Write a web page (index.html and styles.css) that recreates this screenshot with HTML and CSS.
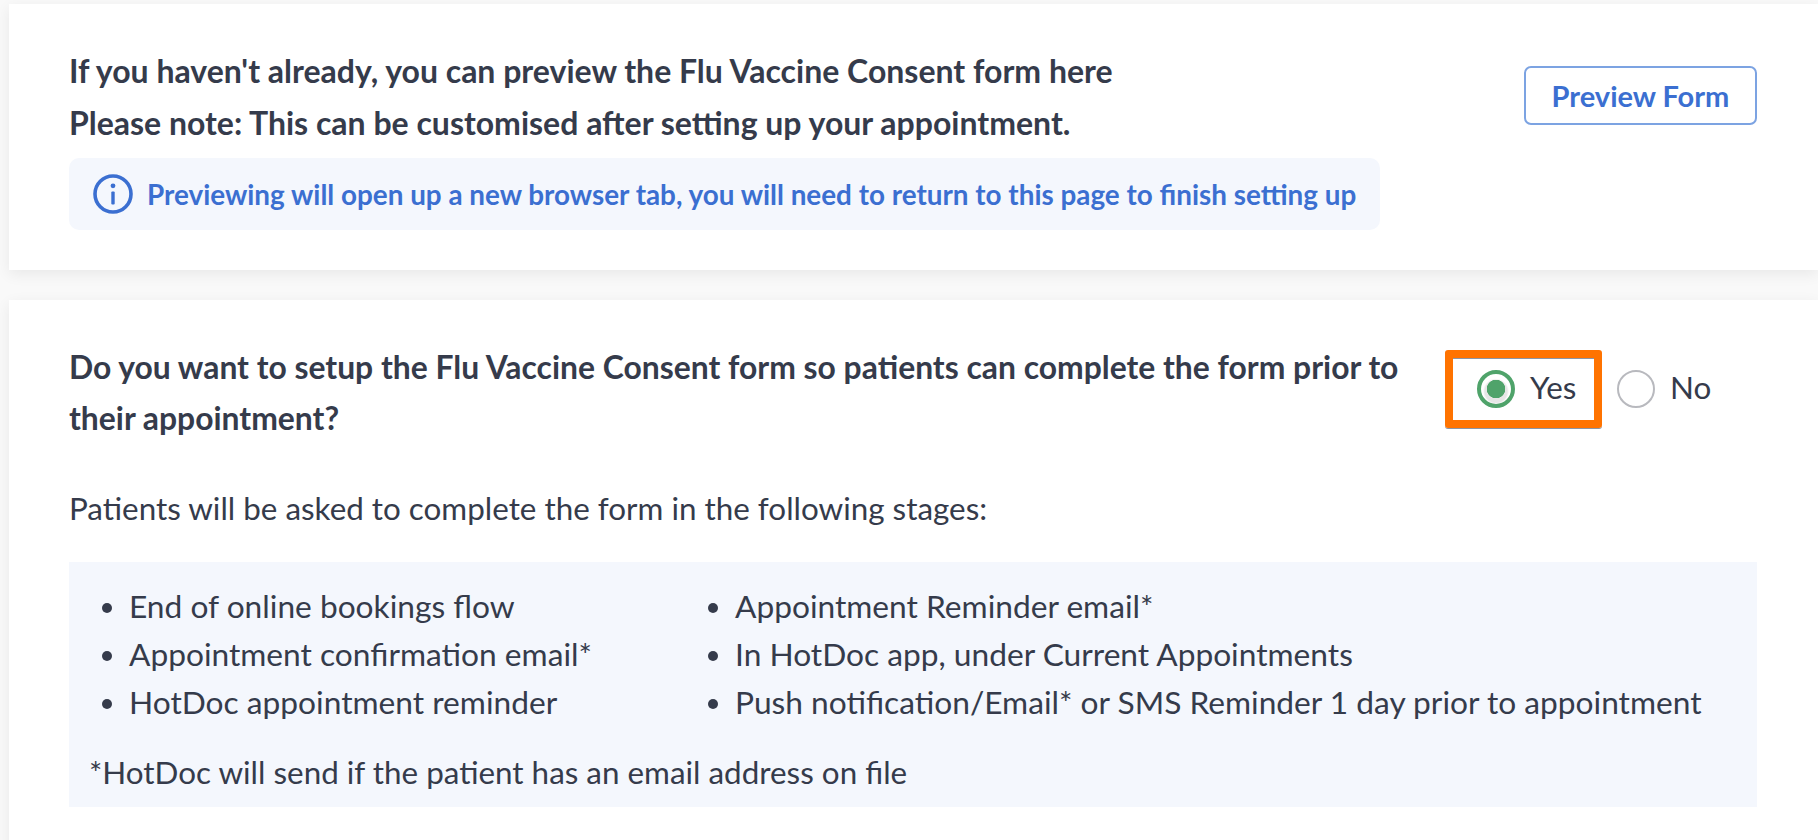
FILE: index.html
```html
<!DOCTYPE html>
<html lang="en">
<head>
<meta charset="utf-8">
<title>Flu Vaccine Consent form</title>
<link rel="stylesheet" href="styles.css">
</head>
<body>
<main class="page">
  <section class="card card-preview">
    <div class="preview-main">
      <p class="strong">If you haven't already, you can preview the Flu Vaccine Consent form here</p>
      <p class="strong">Please note: This can be customised after setting up your appointment.</p>
      <div class="notice">
        <svg class="notice-icon" viewBox="0 0 40 40" aria-hidden="true">
          <circle cx="20" cy="20" r="18" fill="none" stroke="currentColor" stroke-width="3.6"/>
          <circle cx="20" cy="11.8" r="2.4" fill="currentColor"/>
          <rect x="18.3" y="17.5" width="3.4" height="13" rx="1" fill="currentColor"/>
        </svg>
        <span class="notice-text">Previewing will open up a new browser tab, you will need to return to this page to finish setting up</span>
      </div>
    </div>
    <button class="btn" type="button">Preview Form</button>
  </section>
  <section class="card card-setup">
    <div class="question-row">
      <p class="strong question">Do you want to setup the Flu Vaccine Consent form so patients can complete the form prior to their appointment?</p>
      <div class="radios">
        <label class="radio radio-highlight"><span class="dot dot-on"></span>Yes</label>
        <label class="radio"><span class="dot"></span>No</label>
      </div>
    </div>
    <p class="stages">Patients will be asked to complete the form in the following stages:</p>
    <div class="stage-box">
      <div class="stage-lists">
        <ul class="stage-list stage-list-a">
          <li>End of online bookings flow</li>
          <li>Appointment confirmation email*</li>
          <li>HotDoc appointment reminder</li>
        </ul>
        <ul class="stage-list">
          <li>Appointment Reminder email*</li>
          <li>In HotDoc app, under Current Appointments</li>
          <li>Push notification/Email* or SMS Reminder 1 day prior to appointment</li>
        </ul>
      </div>
      <p class="footnote">*HotDoc will send if the patient has an email address on file</p>
    </div>
  </section>
</main>
</body>
</html>
```
FILE: styles.css
```css
* { box-sizing: border-box; }
html, body { margin: 0; height: 100%; overflow: hidden; }
body {
  background: #f9f9f9;
  color: #353b4b;
  font-family: "Lato", "Liberation Sans", sans-serif;
  font-size: 31.4px;
  line-height: 52px;
}
p { margin: 0; }
.page { padding: 4px 0 0 9px; }
.card {
  background: #fff;
  box-shadow: 0 4px 14px rgba(0, 0, 0, 0.07);
  padding: 41px 61px 40px 60px;
}
.card-preview { display: flex; justify-content: space-between; align-items: flex-start; }
.card-setup { margin-top: 30px; height: 560px; padding-top: 42px; }
.strong { font-weight: 700; font-size: 32px; line-height: 51.5px; }
.notice {
  display: flex;
  align-items: center;
  gap: 14px;
  width: 1311px;
  height: 72px;
  margin-top: 10px;
  padding-left: 24px;
  background: #f4f7fd;
  border-radius: 10px;
  color: #3b6fd1;
  font-size: 27.85px;
  font-weight: 700;
  white-space: nowrap;
}
.notice-icon { width: 40px; height: 40px; flex: none; }
.notice-text { padding-top: 2px; }
.btn {
  width: 233px;
  height: 59px;
  margin-top: 21px;
  background: #fff;
  border: 2px solid #7ca3e2;
  border-radius: 7px;
  color: #3b6fd1;
  font: 700 29px/1 "Lato", "Liberation Sans", sans-serif;
}
.question-row { display: flex; justify-content: space-between; align-items: flex-start; }
.question { width: 1340px; font-size: 31.85px; line-height: 51px; }
.radios { display: flex; align-items: center; margin-top: 8px; width: 312px; }
.radio { display: flex; align-items: center; gap: 15px; padding-bottom: 4px; }
.radio-highlight {
  width: 157px;
  height: 78px;
  padding-left: 24px;
  margin-right: 15px;
  border: 8px solid #ff7300;
  border-radius: 3px;
  box-shadow: inset 0 1px 0 #8b95a5, 0 1px 0 #8b95a5;
}
.dot {
  width: 38px;
  height: 38px;
  flex: none;
  margin-top: 4px;
  border: 2px solid #b8b9be;
  border-radius: 50%;
  background: #fff;
}
.dot-on {
  border: 4px solid #4fa36a;
  background:
    radial-gradient(circle at 50% 50%, #4fa36a 0 9px, transparent 9.5px),
    radial-gradient(circle at 50% 58%, #e6e6e6 0 11px, #fff 13px);
}
.stages { margin-top: 38px; }
.stage-box {
  margin-top: 28px;
  padding: 20px 24px 9px 0;
  background: #f4f7fd;
  height: 245px;
  line-height: 48px;
}
.stage-lists { display: flex; font-size: 31.7px; }
.stage-list { margin: 0; padding: 0 0 0 60px; white-space: nowrap; }
.stage-list-a { width: 606px; }
.footnote { margin: 22px 0 0 20px; }
```
